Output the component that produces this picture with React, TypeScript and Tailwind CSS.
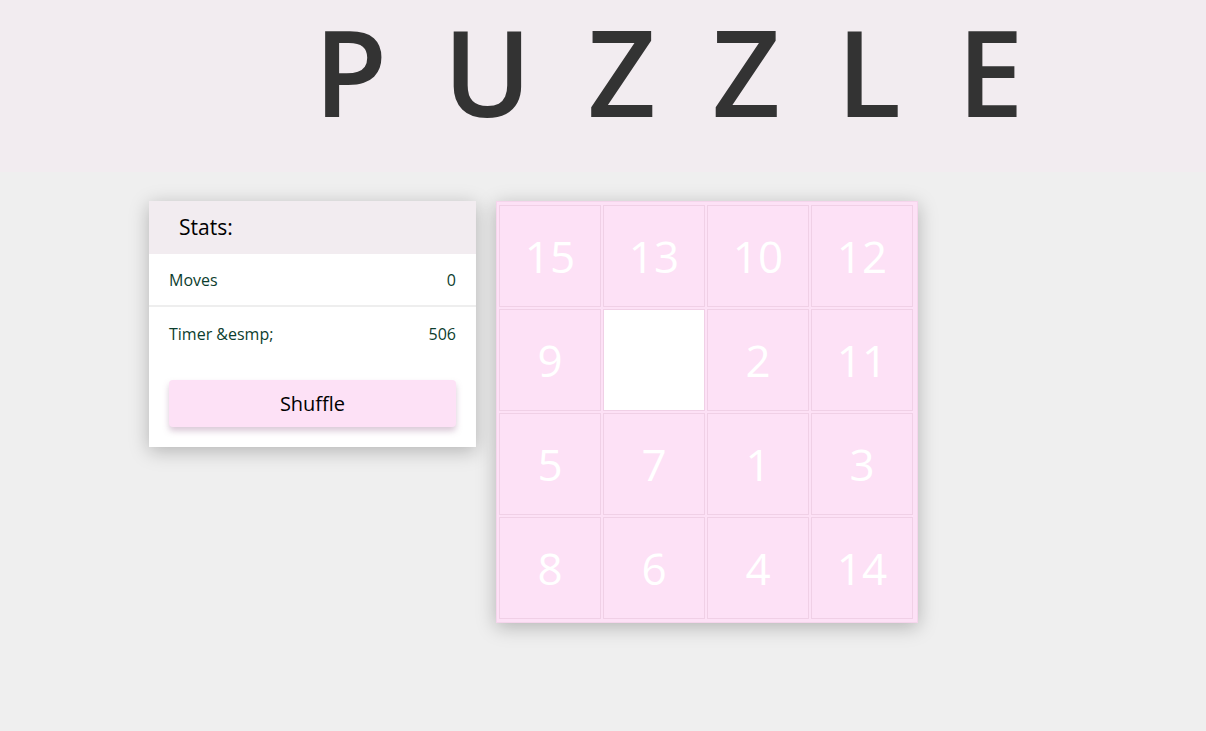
import React from "react";

const tiles = [15, 13, 10, 12, 9, 0, 2, 11, 5, 7, 1, 3, 8, 6, 4, 14];

export default function App() {
  return (
    <div className="min-h-[731px] bg-[#efefef] font-['Open_Sans',sans-serif]">
      <header className="h-[172px] bg-[#f2ecf0] flex items-start pl-[314px]">
        <h1 className="text-[119px] leading-[1.2] font-semibold tracking-[56px] text-[#333333]">PUZZLE</h1>
      </header>
      <main className="flex items-start gap-[20px] pl-[149px] pt-[29px]">
        <div className="w-[327px] bg-white shadow-[0_4px_18px_rgba(0,0,0,0.25)]">
          <div className="h-[53px] bg-[#f2ecf0] flex items-center pl-[30px] text-[21px] text-black">Stats:</div>
          <div className="h-[53px] flex items-center justify-between px-[20px] text-[16px] text-[#0c3d2e] border-b-2 border-[#eeeeee]">
            <span>Moves</span>
            <span>0</span>
          </div>
          <div className="h-[53px] flex items-center justify-between px-[20px] text-[16px] text-[#0c3d2e]">
            <span>Timer &amp;esmp;</span>
            <span>506</span>
          </div>
          <div className="px-[20px] pt-[20px] pb-[20px]">
            <button className="w-full h-[47px] rounded bg-[#fde1f6] text-[20px] text-black shadow-[0_4px_6px_rgba(150,100,140,0.35)]">
              Shuffle
            </button>
          </div>
        </div>
        <div className="w-[422px] h-[422px] bg-[#fde1f6] border border-[#f5d5ec] px-[2px] pt-[3px] grid grid-cols-[repeat(4,102px)] grid-rows-[repeat(4,102px)] gap-[2px] shadow-[0_4px_18px_rgba(0,0,0,0.25)]">
          {tiles.map((n) => (
            <div
              key={n}
              className={
                n === 0
                  ? "bg-white border border-[#f0d0e6]"
                  : "bg-[#fde1f6] border border-[#f0d0e6] flex items-center justify-center text-white text-[44px]"
              }
            >
              {n === 0 ? "" : n}
            </div>
          ))}
        </div>
      </main>
    </div>
  );
}
